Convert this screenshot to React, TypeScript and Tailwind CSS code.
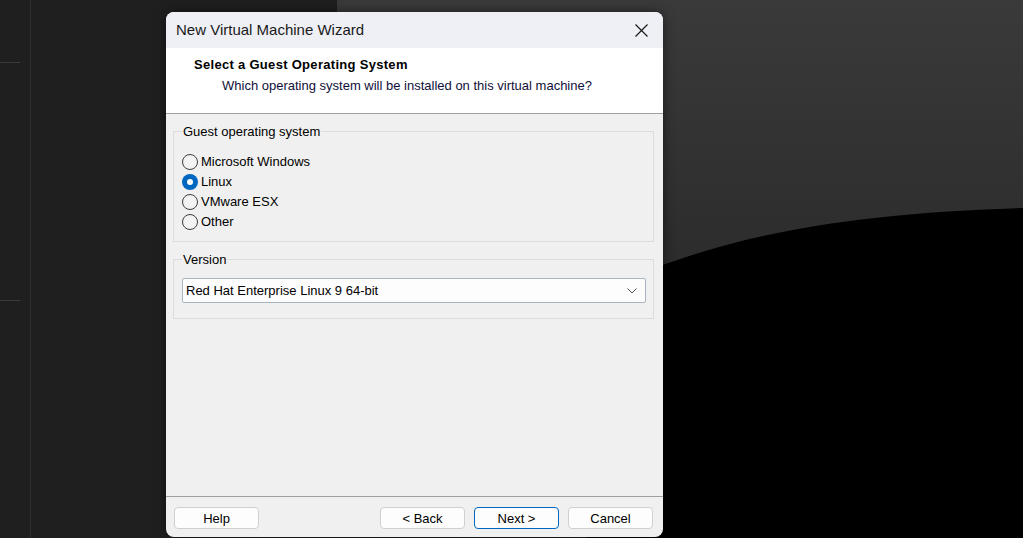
import React from 'react';

const osOptions = ['Microsoft Windows', 'Linux', 'VMware ESX', 'Other'];

function Radio({ label, checked }: { label: string; checked?: boolean }) {
  return (
    <div className="flex items-center h-[20px]">
      {checked ? (
        <span className="w-[16px] h-[16px] rounded-full bg-[#0067c0] flex items-center justify-center">
          <span className="w-[6px] h-[6px] rounded-full bg-white" />
        </span>
      ) : (
        <span className="w-[16px] h-[16px] rounded-full border border-[#3c3c3c] bg-[#f3f3f3]" />
      )}
      <span className="ml-[3px] text-[13px] text-black">{label}</span>
    </div>
  );
}

function WizButton({ label, primary }: { label: string; primary?: boolean }) {
  return (
    <button
      className={
        primary
          ? 'w-[85px] h-[22px] rounded-[4px] border border-[#0067c0] bg-[#fdfdfd] text-[13px] text-black leading-none'
          : 'w-[85px] h-[22px] rounded-[4px] border border-[#d0d0d0] bg-[#fdfdfd] text-[13px] text-black leading-none'
      }
    >
      {label}
    </button>
  );
}

export default function App() {
  return (
    <div
      className="relative w-[1023px] h-[538px] overflow-hidden bg-[#1f1f1f] flex"
      style={{ fontFamily: '"Liberation Sans", Arial, sans-serif' }}
    >
      {/* Left host panel */}
      <div className="w-[337px] h-full flex">
        <div className="w-[30px] h-full flex flex-col">
          <div className="h-[62px]" />
          <div className="w-[20px] h-px bg-[#3a3a3a]" />
          <div className="h-[237px]" />
          <div className="w-[20px] h-px bg-[#3a3a3a]" />
        </div>
        <div className="w-px h-full bg-[#303030]" />
        <div className="flex-1" />
      </div>

      {/* Right host panel with backdrop art */}
      <div className="relative flex-1 h-full bg-linear-to-b from-[#3a3a3a] via-[#2c2c2c] to-[#1c1c1c]">
        <svg className="absolute inset-0" width="686" height="538" viewBox="0 0 686 538">
          <path d="M250 298 C 360 243, 480 214, 686 208 L686 538 L250 538 Z" fill="#000" />
        </svg>
      </div>

      {/* Wizard dialog */}
      <div className="absolute left-[166px] top-[12px] w-[497px] h-[525px] rounded-[8px] overflow-hidden bg-[#f0f0f0] flex flex-col shadow-[0_0_12px_rgba(0,0,0,0.5)]">
        {/* Title bar */}
        <div className="h-[36px] bg-[#eff0f5] flex items-center justify-between pl-[10px] pr-[15px]">
          <span className="text-[15px] text-[#1a1a1a]">New Virtual Machine Wizard</span>
          <svg width="13" height="13" viewBox="0 0 13 13">
            <path d="M0.5 0.5 L12.5 12.5 M12.5 0.5 L0.5 12.5" stroke="#1a1a1a" strokeWidth="1.2" />
          </svg>
        </div>

        {/* Header */}
        <div className="h-[66px] bg-white border-b border-[#a0a0a0] pt-[9px]">
          <div className="pl-[28px] text-[13px] leading-[16px] font-bold tracking-[0.3px] text-black">
            Select a Guest Operating System
          </div>
          <div className="pl-[56px] mt-[5px] text-[13px] leading-[16px] text-[#10103a]">
            Which operating system will be installed on this virtual machine?
          </div>
        </div>

        {/* Body */}
        <div className="flex-1 pt-[10px] pl-[7px] pr-[9px]">
          <fieldset className="border border-[#dcdcdc] pl-[8px] pb-[9px]">
            <legend className="px-px text-[13px] leading-[15px] text-black">Guest operating system</legend>
            <div className="mt-[13px] flex flex-col">
              {osOptions.map(os => (
                <Radio key={os} label={os} checked={os === 'Linux'} />
              ))}
            </div>
          </fieldset>

          <fieldset className="mt-[10px] border border-[#dcdcdc] pl-[8px] pr-[7px] pb-[15px]">
            <legend className="px-px text-[13px] leading-[15px] text-black">Version</legend>
            <div className="mt-[11px] h-[25px] border border-[#a9b3c2] rounded-[2px] bg-[#fdfdfe] flex items-center justify-between pl-[3px] pr-[8px]">
              <span className="text-[13px] text-black">Red Hat Enterprise Linux 9 64-bit</span>
              <svg width="10" height="6" viewBox="0 0 10 6">
                <path d="M0.5 0.5 L5 5 L9.5 0.5" fill="none" stroke="#555" strokeWidth="1" />
              </svg>
            </div>
          </fieldset>
        </div>

        {/* Footer */}
        <div className="h-[41px] border-t border-[#a0a0a0] pt-[10px] pl-[8px] pr-[10px] flex">
          <WizButton label="Help" />
          <div className="flex-1" />
          <div className="flex gap-[9px]">
            <WizButton label="< Back" />
            <WizButton label="Next >" primary />
            <WizButton label="Cancel" />
          </div>
        </div>
      </div>
    </div>
  );
}
